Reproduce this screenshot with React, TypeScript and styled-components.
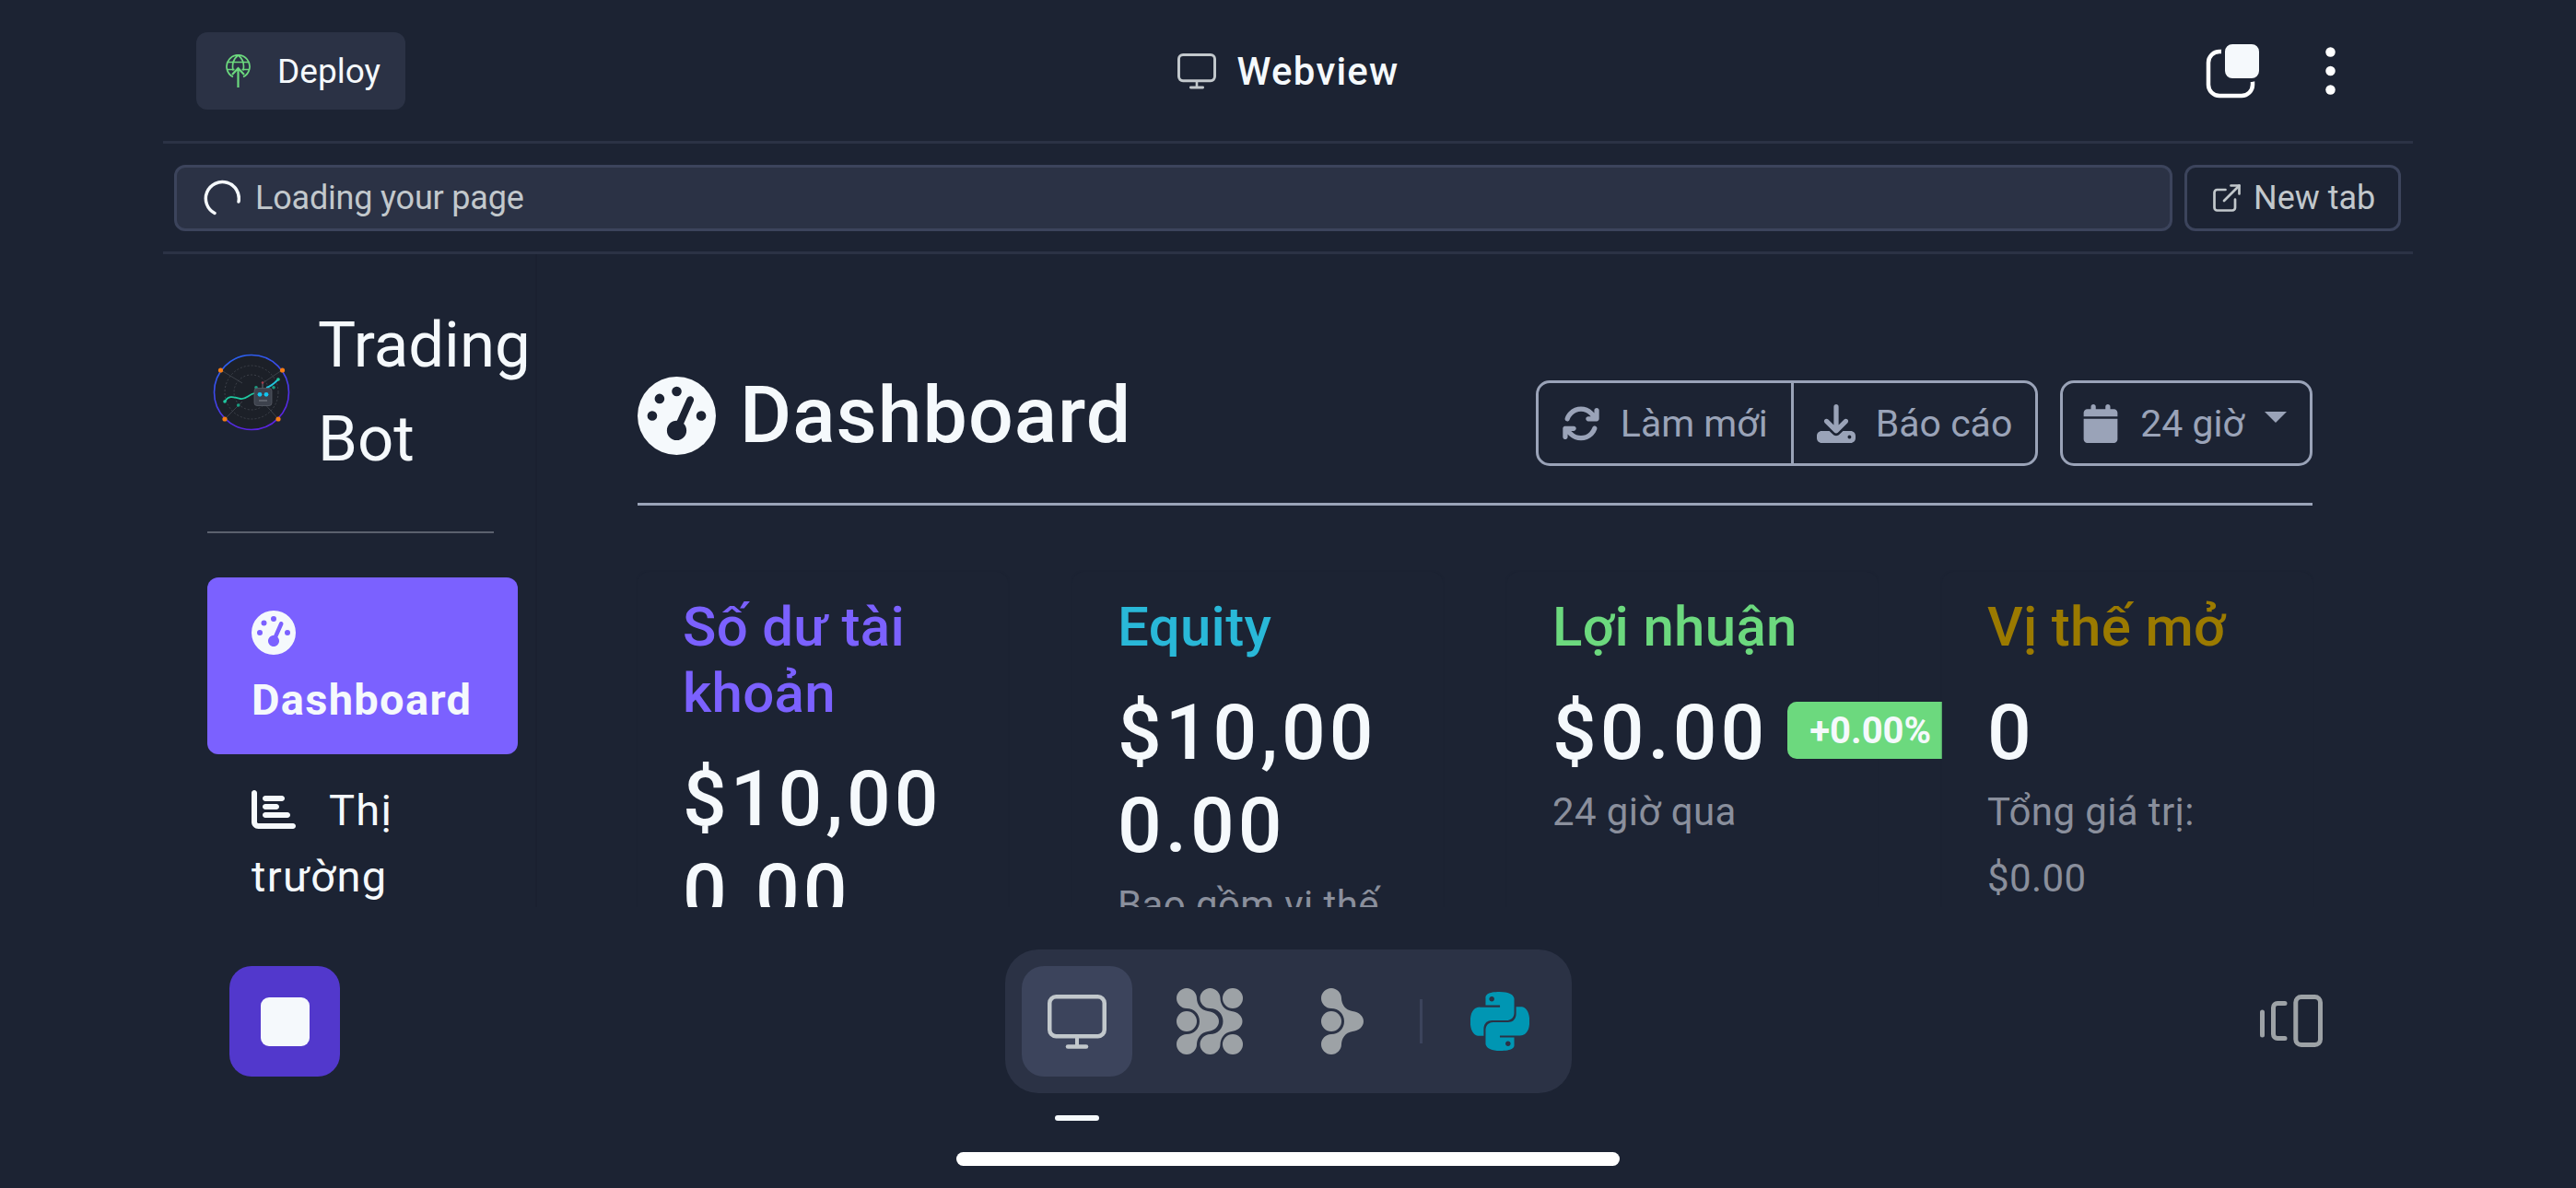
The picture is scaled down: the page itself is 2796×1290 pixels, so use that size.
import React from "react";
import styled, { createGlobalStyle } from "styled-components";
import { FaGaugeHigh, FaChartBar, FaArrowsRotate, FaDownload, FaCalendar } from "react-icons/fa6";
import { SiPython } from "react-icons/si";
import { ExternalLink } from "lucide-react";

const GlobalStyle = createGlobalStyle`
  html, body {
    margin: 0;
    width: 2796px;
    height: 1290px;
    overflow: hidden;
    background: #1c2333;
    font-family: Roboto, "Noto Sans", sans-serif;
    color: #f5f9fc;
  }
  * { box-sizing: border-box; }
`;

const Shell = styled.div`
  width: 2796px;
  height: 1290px;
  padding: 0 177px;
  display: flex;
  flex-direction: column;
  overflow: hidden;
`;

const TopBar = styled.header`
  height: 156px;
  flex-shrink: 0;
  border-bottom: 3px solid #2b3245;
  padding: 0 36px;
  display: grid;
  grid-template-columns: 1fr auto 1fr;
  align-items: center;
`;

const DeployButton = styled.div`
  justify-self: start;
  width: 227px;
  height: 84px;
  margin-top: 1px;
  padding-left: 32px;
  display: flex;
  align-items: center;
  gap: 29px;
  border-radius: 12px;
  background: #2b3245;
  font-size: 37px;
`;

const PaneTitle = styled.div`
  margin-top: 2px;
  display: flex;
  align-items: center;
  gap: 23px;
  font-size: 42px;
  font-weight: 500;
  letter-spacing: 1.2px;
`;

const TopActions = styled.div`
  justify-self: end;
  margin-right: 48px;
  display: flex;
  align-items: center;
  gap: 72px;
`;

const UrlRow = styled.div`
  height: 120px;
  flex-shrink: 0;
  border-bottom: 3px solid #2b3245;
  padding: 0 13px 0 12px;
  display: flex;
  align-items: center;
  gap: 13px;
`;

const UrlField = styled.div`
  flex: 1;
  height: 72px;
  padding-left: 29px;
  display: flex;
  align-items: center;
  gap: 16px;
  border: 3px solid #3c445c;
  border-radius: 12px;
  background: #2b3245;
  color: #c2c8cc;
  font-size: 36px;
  letter-spacing: -0.2px;
`;

const NewTabButton = styled.div`
  width: 235px;
  height: 72px;
  padding-left: 25px;
  display: flex;
  align-items: center;
  gap: 11px;
  border: 3px solid #3c445c;
  border-radius: 12px;
  color: #c2c8cc;
  font-size: 36px;
`;

const Workspace = styled.div`
  height: 709px;
  flex-shrink: 0;
  display: flex;
  overflow: hidden;
`;

const Sidebar = styled.aside`
  width: 406px;
  flex-shrink: 0;
  padding: 48px 19px 0 48px;
  border-right: 2px solid #1a2030;
`;

const Brand = styled.div`
  display: flex;
  align-items: center;
  gap: 24px;
`;

const BrandName = styled.div`
  min-width: 0;
  font-size: 69px;
  line-height: 102px;
`;

const SideRule = styled.hr`
  width: 311px;
  height: 2px;
  margin: 49px 0 48px;
  border: 0;
  background: #5b616e;
`;

const NavItem = styled.div<{ $active?: boolean }>`
  padding: 25px 48px 23px;
  border-radius: 12px;
  font-size: 47px;
  line-height: 72px;
  letter-spacing: 1.3px;
  font-weight: ${(p) => (p.$active ? 700 : 400)};
  background: ${(p) => (p.$active ? "#7b61ff" : "transparent")};
  svg {
    width: 48px;
    height: 48px;
    margin-right: 36px;
    vertical-align: -7px;
  }
`;

const Main = styled.main`
  flex: 1;
  min-width: 0;
  padding: 124px 109px 0;
`;

const PageHeader = styled.div`
  height: 146px;
  display: flex;
  justify-content: space-between;
  align-items: flex-start;
`;

const PageTitle = styled.h2`
  margin: 0;
  display: flex;
  align-items: center;
  gap: 26px;
  font-size: 86px;
  line-height: 102px;
  font-weight: 500;
  letter-spacing: 1px;
  svg {
    width: 85px;
    height: 85px;
  }
`;

const HeaderTools = styled.div`
  margin-top: 13px;
  display: flex;
  gap: 24px;
`;

const ToolGroup = styled.div`
  height: 93px;
  display: flex;
  border: 3px solid #9aa3b8;
  border-radius: 15px;
`;

const ToolButton = styled.div`
  height: 100%;
  padding: 0 25px;
  display: flex;
  align-items: center;
  gap: 22px;
  color: #9aa3b8;
  font-size: 41px;
  &:only-child {
    padding-left: 20px;
  }
  & + & {
    border-left: 3px solid #9aa3b8;
  }
  svg {
    height: 42px;
    width: auto;
  }
`;

const Caret = styled.span`
  width: 0;
  height: 0;
  margin-top: -14px;
  border-left: 12px solid transparent;
  border-right: 12px solid transparent;
  border-top: 12px solid #9aa3b8;
`;

const PageRule = styled.hr`
  height: 3px;
  margin: 0 0 72px;
  border: 0;
  background: #9aa3b8;
`;

const CardGrid = styled.div`
  display: grid;
  grid-template-columns: repeat(4, 1fr);
  gap: 70px;
`;

const Card = styled.section`
  position: relative;
  min-width: 0;
  padding: 24px 49px;
  border-radius: 12px;
  background: #1c2333;
  box-shadow: 0 0 2px #1b2232;
`;

const CardLabel = styled.h5<{ $color: string }>`
  margin: 0 0 28px;
  font-size: 60px;
  line-height: 72px;
  font-weight: 500;
  letter-spacing: 0.3px;
  color: ${(p) => p.$color};
`;

const ValueRow = styled.div`
  display: flex;
  align-items: center;
  gap: 21px;
`;

const CardValue = styled.div`
  flex-shrink: 0;
  font-size: 84px;
  line-height: 101px;
  font-weight: 500;
  letter-spacing: 4px;
  overflow-wrap: anywhere;
`;

const ChangeBadge = styled.span`
  flex-shrink: 0;
  margin-top: -5px;
  height: 62px;
  padding: 0 24px;
  display: flex;
  align-items: center;
  border-radius: 10px;
  background: #6cd97e;
  font-size: 40px;
  font-weight: 700;
`;

const CardNote = styled.div`
  font-size: 42px;
  line-height: 72px;
  color: #8a8f9c;
  letter-spacing: 0.4px;
`;

const BottomArea = styled.footer`
  flex: 1;
  padding-top: 46px;
  display: flex;
  flex-direction: column;
`;

const DockRow = styled.div`
  padding: 0 72px;
  display: grid;
  grid-template-columns: 1fr auto 1fr;
  align-items: start;
`;

const StopButton = styled.div`
  justify-self: start;
  width: 120px;
  height: 120px;
  margin-top: 18px;
  display: flex;
  align-items: center;
  justify-content: center;
  border-radius: 24px;
  background: #5238cc;
`;

const StopMark = styled.span`
  width: 53px;
  height: 53px;
  border-radius: 9px;
  background: #f5f9fc;
`;

const DockColumn = styled.div`
  display: flex;
  flex-direction: column;
`;

const Dock = styled.nav`
  height: 156px;
  padding: 18px;
  display: flex;
  gap: 24px;
  border-radius: 36px;
  background: #2b3245;
`;

const DockItem = styled.div<{ $active?: boolean }>`
  width: 120px;
  height: 120px;
  display: flex;
  align-items: center;
  justify-content: center;
  border-radius: 24px;
  color: #9da2a6;
  background: ${(p) => (p.$active ? "#3c445c" : "transparent")};
`;

const DockDivider = styled.span`
  width: 3px;
  height: 48px;
  align-self: center;
  background: #3c445c;
`;

const TabIndicator = styled.span`
  width: 48px;
  height: 6px;
  margin: 24px 0 0 54px;
  border-radius: 3px;
  background: #f5f9fc;
`;

const SideToggle = styled.div`
  justify-self: end;
  margin: 49px 26px 0 0;
  display: flex;
`;

const HomeBar = styled.div`
  align-self: center;
  width: 720px;
  height: 15px;
  margin-top: 34px;
  border-radius: 8px;
  background: #fff;
`;

const PYTHON_BLUE = "#0096b3";

const MonitorIcon = ({ width }: { width: number }) => (
  <svg width={width} viewBox="0 0 64 59" fill="none" stroke="#c2c8cc">
    <rect x="2.25" y="2.25" width="59.5" height="43" rx="7" strokeWidth="4.5" />
    <path d="M32 46v10" strokeWidth="4" />
    <path d="M22 56.5h20" strokeWidth="4.5" strokeLinecap="round" />
  </svg>
);

const DeployIcon = () => (
  <svg width="27" height="36" viewBox="0 0 27 36" fill="none" stroke="#6cd97e" strokeWidth="1.7">
    <path d="M8 24.5A12.5 12.5 0 1 1 19 24.5" />
    <path d="M13.5 1C9.5 4 7.5 8 7.5 13c0 1.5.2 3 .6 4.5M13.5 1C17.5 4 19.5 8 19.5 13c0 1.5-.2 3-.6 4.5" />
    <path d="M1.5 8.5h24M1.5 16.5h8M17.5 16.5h8" />
    <path d="M13.5 36V14.5M7 22l6.500-7 6.500 7" strokeWidth="2.2" />
  </svg>
);

const Spinner = () => (
  <svg width="40" height="40" viewBox="0 0 40 40" fill="none" stroke="#f5f9fc" strokeWidth="3.5" strokeLinecap="round">
    <path d="M12 36.5A18 18 0 1 1 38 24" />
  </svg>
);

const OverlapIcon = () => (
  <svg width="58" height="60" viewBox="0 0 58 60" fill="none">
    <rect x="3" y="9" width="48" height="48" rx="12" stroke="#fff" strokeWidth="4.5" />
    <rect x="19" y="-1" width="41" height="41" rx="10" fill="#f5f9fc" stroke="#1c2333" strokeWidth="4" />
  </svg>
);

const KebabIcon = () => (
  <svg width="11" height="52" viewBox="0 0 11 52" fill="#fff">
    <circle cx="5.5" cy="5.5" r="5.25" />
    <circle cx="5.5" cy="26" r="5.25" />
    <circle cx="5.5" cy="46.5" r="5.25" />
  </svg>
);

const FLOW_PATH =
  "M11 0C17 0 22 5 22 11C22 17 26 24 34 25C41 26 46 30 46 36C46 42 41 46 34 47C26 48 22 55 22 61C22 67 17 72 11 72C5 72 0 67 0 61C0 55 5 50 11 50C19 50 25 44 25 36C25 28 19 22 11 22C5 22 0 17 0 11C0 5 5 0 11 0Z";

const AgentIcon = () => (
  <svg width="72" height="72" viewBox="0 0 72 72" fill="currentColor">
    <path d={FLOW_PATH} />
    <path d={FLOW_PATH} transform="translate(25.5 0)" />
    <ellipse cx="11" cy="36" rx="11" ry="11" />
    <ellipse cx="61" cy="11" rx="11" ry="11" />
    <ellipse cx="61" cy="61" rx="11" ry="11" />
  </svg>
);

const ConsoleIcon = () => (
  <svg width="46" height="72" viewBox="0 0 46 72" fill="currentColor">
    <path d={FLOW_PATH} />
    <ellipse cx="11" cy="36" rx="11" ry="11" />
  </svg>
);

const PanelToggleIcon = () => (
  <svg width="68" height="57" viewBox="0 0 68 57" fill="none" stroke="#9da2a6" strokeWidth="5" strokeLinecap="round">
    <path d="M2.5 19v25" />
    <path d="M27 9.5h-8a4.5 4.5 0 0 0-4.5 4.5v29a4.5 4.5 0 0 0 4.5 4.5h8" />
    <rect x="38.8" y="2.5" width="26.7" height="52" rx="6" />
  </svg>
);

const BotLogo = () => (
  <svg width="96" height="96" viewBox="-48 -48 96 96" style={{ flexShrink: 0 }}>
    <defs>
      <linearGradient id="ring" x1="0" y1="0" x2="0.4" y2="1">
        <stop offset="0" stopColor="#2468f2" />
        <stop offset="1" stopColor="#5a24e0" />
      </linearGradient>
    </defs>
    <circle r="40.5" fill="#1c2028" stroke="url(#ring)" strokeWidth="1.6" />
    <g fill="none" stroke="#4a4f58" strokeWidth="0.7">
      <circle r="29" strokeDasharray="2 2" />
      <circle r="19" strokeDasharray="2 2" />
      <path d="M-33-24L-10-10M33-24L12-10M-29 29L-10 10M29 29L12 10" />
    </g>
    <path d="M-29 10C-24 2-18 6-12 7C-6 8-4 3 3 1" fill="none" stroke="#1fc8a0" strokeWidth="1.8" />
    <path d="M16-5C21-6 25-10 29-14" fill="none" stroke="#22c4dc" strokeWidth="1.8" />
    <circle cx="29" cy="-14" r="1.8" fill="#1fc8a0" />
    <circle cx="-29" cy="10" r="1.8" fill="#1fc8a0" />
    <circle cx="-14.3" cy="14" r="1.8" fill="#1a9c80" />
    <circle cx="24" cy="-5.3" r="1.8" fill="#1a9c80" />
    <circle cx="5" cy="-5.3" r="1.8" fill="#1a9c80" />
    <path d="M12-10v6" stroke="#6a6f78" strokeWidth="1" />
    <circle cx="12" cy="-10.5" r="1.3" fill="#a83a4a" />
    <rect x="3" y="-4.5" width="19" height="19" rx="3" fill="#3d424d" stroke="#5c616b" strokeWidth="0.7" />
    <circle cx="9" cy="2.3" r="2.4" fill="#13c4ee" />
    <circle cx="16" cy="2.3" r="2.4" fill="#13c4ee" />
    <path d="M8 9h9" stroke="#737882" strokeWidth="1.2" />
    <g fill="#f57c14">
      <circle cx="-33.5" cy="-24" r="2.6" />
      <circle cx="33.5" cy="-24" r="2.6" />
      <circle cx="-29" cy="29" r="2.6" />
      <circle cx="29" cy="29" r="2.6" />
    </g>
  </svg>
);

export default function App() {
  return (
    <Shell>
      <GlobalStyle />
      <TopBar>
        <DeployButton>
          <DeployIcon />
          Deploy
        </DeployButton>
        <PaneTitle>
          <MonitorIcon width={42} />
          Webview
        </PaneTitle>
        <TopActions>
          <OverlapIcon />
          <KebabIcon />
        </TopActions>
      </TopBar>

      <UrlRow>
        <UrlField>
          <Spinner />
          Loading your page
        </UrlField>
        <NewTabButton>
          <ExternalLink size={36} strokeWidth={1.8} />
          New tab
        </NewTabButton>
      </UrlRow>

      <Workspace>
        <Sidebar>
          <Brand>
            <BotLogo />
            <BrandName>Trading Bot</BrandName>
          </Brand>
          <SideRule />
          <NavItem $active>
            <FaGaugeHigh />
            Dashboard
          </NavItem>
          <NavItem>
            <FaChartBar />
            Thị trường
          </NavItem>
        </Sidebar>

        <Main>
          <PageHeader>
            <PageTitle>
              <FaGaugeHigh />
              Dashboard
            </PageTitle>
            <HeaderTools>
              <ToolGroup>
                <ToolButton>
                  <FaArrowsRotate />
                  Làm mới
                </ToolButton>
                <ToolButton>
                  <FaDownload />
                  Báo cáo
                </ToolButton>
              </ToolGroup>
              <ToolGroup>
                <ToolButton>
                  <FaCalendar />
                  24 giờ
                  <Caret />
                </ToolButton>
              </ToolGroup>
            </HeaderTools>
          </PageHeader>
          <PageRule />

          <CardGrid>
            <Card>
              <CardLabel $color="#7b61ff">Số dư tài khoản</CardLabel>
              <CardValue>$10,000.00</CardValue>
            </Card>
            <Card>
              <CardLabel $color="#29b8d8">Equity</CardLabel>
              <CardValue>$10,000.00</CardValue>
              <CardNote>Bao gồm vị thế</CardNote>
            </Card>
            <Card>
              <CardLabel $color="#6cd97e">Lợi nhuận</CardLabel>
              <ValueRow>
                <CardValue>$0.00</CardValue>
                <ChangeBadge>+0.00%</ChangeBadge>
              </ValueRow>
              <CardNote>24 giờ qua</CardNote>
            </Card>
            <Card>
              <CardLabel $color="#9b7a00">Vị thế mở</CardLabel>
              <CardValue>0</CardValue>
              <CardNote>Tổng giá trị: $0.00</CardNote>
            </Card>
          </CardGrid>
        </Main>
      </Workspace>

      <BottomArea>
        <DockRow>
          <StopButton>
            <StopMark />
          </StopButton>
          <DockColumn>
            <Dock>
              <DockItem $active>
                <MonitorIcon width={64} />
              </DockItem>
              <DockItem>
                <AgentIcon />
              </DockItem>
              <DockItem>
                <ConsoleIcon />
              </DockItem>
              <DockDivider />
              <DockItem>
                <SiPython size={64} color={PYTHON_BLUE} />
              </DockItem>
            </Dock>
            <TabIndicator />
          </DockColumn>
          <SideToggle>
            <PanelToggleIcon />
          </SideToggle>
        </DockRow>
        <HomeBar />
      </BottomArea>
    </Shell>
  );
}
